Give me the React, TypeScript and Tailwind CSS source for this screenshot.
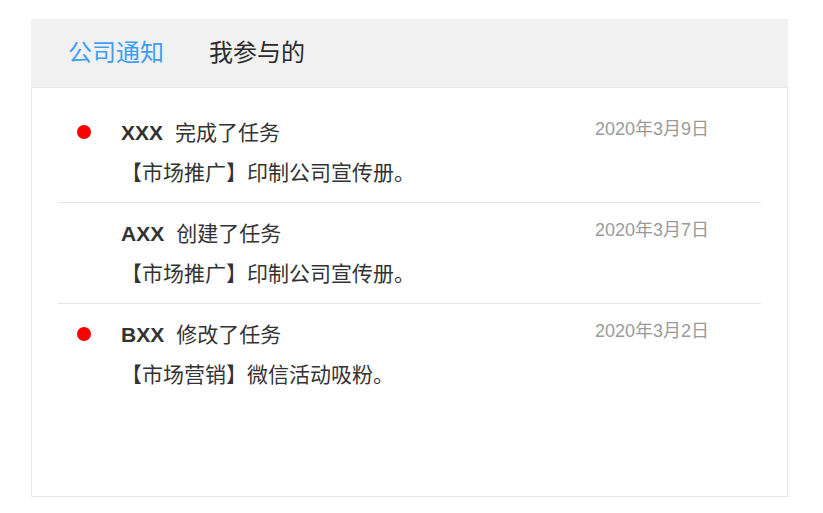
import React from 'react';

type Notice = {
  name: string;
  action: string;
  detail: string;
  date: string;
  unread: boolean;
};

const notices: Notice[] = [
  { name: 'XXX', action: '完成了任务', detail: '【市场推广】印制公司宣传册。', date: '2020年3月9日', unread: true },
  { name: 'AXX', action: '创建了任务', detail: '【市场推广】印制公司宣传册。', date: '2020年3月7日', unread: false },
  { name: 'BXX', action: '修改了任务', detail: '【市场营销】微信活动吸粉。', date: '2020年3月2日', unread: true },
];

const font = "font-['Liberation_Sans','Noto_Sans_CJK_SC',sans-serif]";

export default function App() {
  return (
    <div className={`min-h-[513px] bg-white pl-[31px] pt-[19px] ${font}`}>
      <div className="w-[757px]">
        <div className="flex h-[68px] items-center gap-[45px] bg-[#f1f1f1] pl-[37px] text-[24px]">
          <span className="text-[#3d9ef5]">公司通知</span>
          <span className="text-[#2b2b2b]">我参与的</span>
        </div>

        <div className="h-[410px] border border-[#e8e8e8] px-[26px] pt-[14px]">
          {notices.map((n, i) => (
            <div
              key={n.name}
              className={`flex h-[101px] pt-[15px] ${i < notices.length - 1 ? 'border-b border-[#e6e6e6]' : ''}`}
            >
              <div className="w-[63px] shrink-0 pl-[19px]">
                {n.unread && <div className="mt-[8px] h-[14px] w-[14px] rounded-full bg-[#ff0000]" />}
              </div>
              <div className="flex-1 pr-[52px]">
                <div className="flex items-start justify-between">
                  <div className="mt-[1px] text-[21px] leading-[30px] text-[#333]">
                    <span className="font-bold">{n.name}</span>
                    <span className="ml-[12px]">{n.action}</span>
                  </div>
                  <span className="text-[18px] leading-[24px] text-[#9a9a9a]">{n.date}</span>
                </div>
                <div className="mt-[10px] text-[21px] leading-[30px] text-[#333]">{n.detail}</div>
              </div>
            </div>
          ))}
        </div>
      </div>
    </div>
  );
}
